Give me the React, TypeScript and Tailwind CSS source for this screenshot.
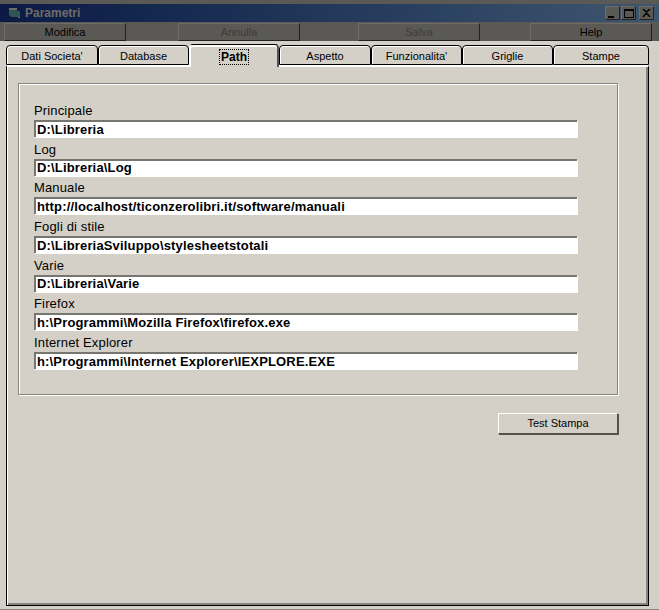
const font = "font-['Liberation_Sans',Arial,sans-serif]";

const tabs = [
  { label: "Dati Societa'", width: "w-[92px]" },
  { label: "Database", width: "w-[91px]" },
  { label: "Path", width: "w-[90px]", active: true },
  { label: "Aspetto", width: "w-[92px]" },
  { label: "Funzionalita'", width: "w-[91px]" },
  { label: "Griglie", width: "w-[91px]" },
  { label: "Stampe", width: "w-[96px]" },
];

const fields = [
  { label: "Principale", value: "D:\\Libreria" },
  { label: "Log", value: "D:\\Libreria\\Log" },
  { label: "Manuale", value: "http://localhost/ticonzerolibri.it/software/manuali" },
  { label: "Fogli di stile", value: "D:\\LibreriaSviluppo\\stylesheetstotali" },
  { label: "Varie", value: "D:\\Libreria\\Varie" },
  { label: "Firefox", value: "h:\\Programmi\\Mozilla Firefox\\firefox.exe" },
  { label: "Internet Explorer", value: "h:\\Programmi\\Internet Explorer\\IEXPLORE.EXE" },
];

function ToolButton({ label, disabled, className }: { label: string; disabled?: boolean; className: string }) {
  return (
    <div
      className={`flex h-[18px] w-[122px] items-center justify-center border border-t-[#6e6c67] border-l-[#6e6c67] border-r-[#22211f] border-b-[#22211f] bg-[#5b5955] text-[11px] ${
        disabled ? "text-[#3d3c39]" : "text-black"
      } ${className}`}
    >
      {label}
    </div>
  );
}

function CaptionButton({ children }: { children: React.ReactNode }) {
  return (
    <div className="flex h-[14px] w-[15px] items-center justify-center border border-t-[#6e6c67] border-l-[#6e6c67] border-r-[#22211f] border-b-[#22211f] bg-[#5b5955]">
      {children}
    </div>
  );
}

export default function App() {
  return (
    <div className={`flex h-[610px] w-[659px] flex-col overflow-hidden bg-[#d4d0c8] shadow-[inset_0_-1px_0_#86847f] ${font}`}>
      <div className="h-1 bg-[#5b5955]" />
      <div className="flex h-[18px] items-center justify-between bg-gradient-to-r from-[#0a1a45] to-[#3f566f] pl-2 pr-[5px]">
        <div className="flex items-center gap-[3px]">
          <svg width="14" height="14" viewBox="0 0 14 14">
            <path d="M1 2h8v3h3v6H3L1 9z" fill="#2f5555" />
            <path d="M1 2h8v2H1z" fill="#6e6c67" />
            <path d="M10 11h2v1h-2z" fill="#6e6c67" />
          </svg>
          <span className="text-[12px] font-bold text-[#6e6c67]">Parametri</span>
        </div>
        <div className="flex gap-px">
          <CaptionButton>
            <div className="mt-[7px] mr-[3px] h-[2px] w-[6px] bg-black" />
          </CaptionButton>
          <CaptionButton>
            <div className="h-[9px] w-[10px] border border-t-2 border-black" />
          </CaptionButton>
          <div className="w-px" />
          <CaptionButton>
            <svg width="9" height="8" viewBox="0 0 9 8">
              <path d="M1 0l3.5 3L8 0M1 8l3.5-4L8 8" stroke="#000" strokeWidth="1.5" fill="none" />
            </svg>
          </CaptionButton>
        </div>
      </div>
      <div className="flex h-[19px] items-start bg-[#5b5955] pt-px pl-1">
        <ToolButton label="Modifica" className="mr-[52px]" />
        <ToolButton label="Annulla" disabled className="mr-[58px]" />
        <ToolButton label="Salva" disabled className="mr-[50px]" />
        <ToolButton label="Help" className="" />
      </div>

      <div className="relative mt-1 flex h-[20px] items-start pl-[6px]">
        {tabs.map((tab) =>
          tab.active ? (
            <div
              key={tab.label}
              className={`z-10 -mt-px flex h-[23px] items-center justify-center rounded-t-[4px] border-t border-r-2 border-l-2 border-t-black border-r-[#55534f] border-l-white bg-[#d4d0c8] pt-[2px] text-[12px] font-bold shadow-[inset_0_2px_0_#fff] ${tab.width}`}
            >
              <span className="border border-dotted border-black px-px leading-[14px]">{tab.label}</span>
            </div>
          ) : (
            <div
              key={tab.label}
              className={`flex h-[20px] items-center justify-center rounded-t-[4px] border border-black bg-[#d4d0c8] pt-[3px] text-[11px] text-black shadow-[inset_1px_1px_0_#fff] ${tab.width}`}
            >
              {tab.label}
            </div>
          ),
        )}
      </div>

      <div className="mr-[10px] mb-[4px] ml-[6px] flex flex-1 flex-col border-x border-b border-t-2 border-x-black border-b-black border-t-white shadow-[inset_1px_0_0_#fff,inset_-2px_-2px_0_#86847f]">
        <div className="mt-[16px] ml-[11px] flex h-[312px] w-[600px] flex-col border border-[#86847f] pt-[17px] pr-[40px] pl-[15px] shadow-[1px_1px_0_#fff,inset_1px_1px_0_#fff]">
          {fields.map((field) => (
            <div key={field.label} className="flex h-[38.67px] flex-col">
              <div className="h-[19px] text-[13px] leading-[19px] tracking-[0.15px] text-black">{field.label}</div>
              <div className="flex h-[17px] items-center border-t-2 border-l-2 border-t-[#77756f] border-l-[#77756f] bg-white pl-px text-[13px] font-bold tracking-[0.16px] text-black shadow-[1px_1px_0_#fff]">
                {field.value}
              </div>
            </div>
          ))}
        </div>
        <div className="mt-[18px] mr-[30px] flex justify-end">
          <div className="flex h-[21px] w-[120px] items-center justify-center border border-t-white border-l-white border-r-[#55534f] border-b-[#55534f] text-[11px] text-black shadow-[1px_1px_0_#55534f]">
            Test Stampa
          </div>
        </div>
      </div>
    </div>
  );
}
